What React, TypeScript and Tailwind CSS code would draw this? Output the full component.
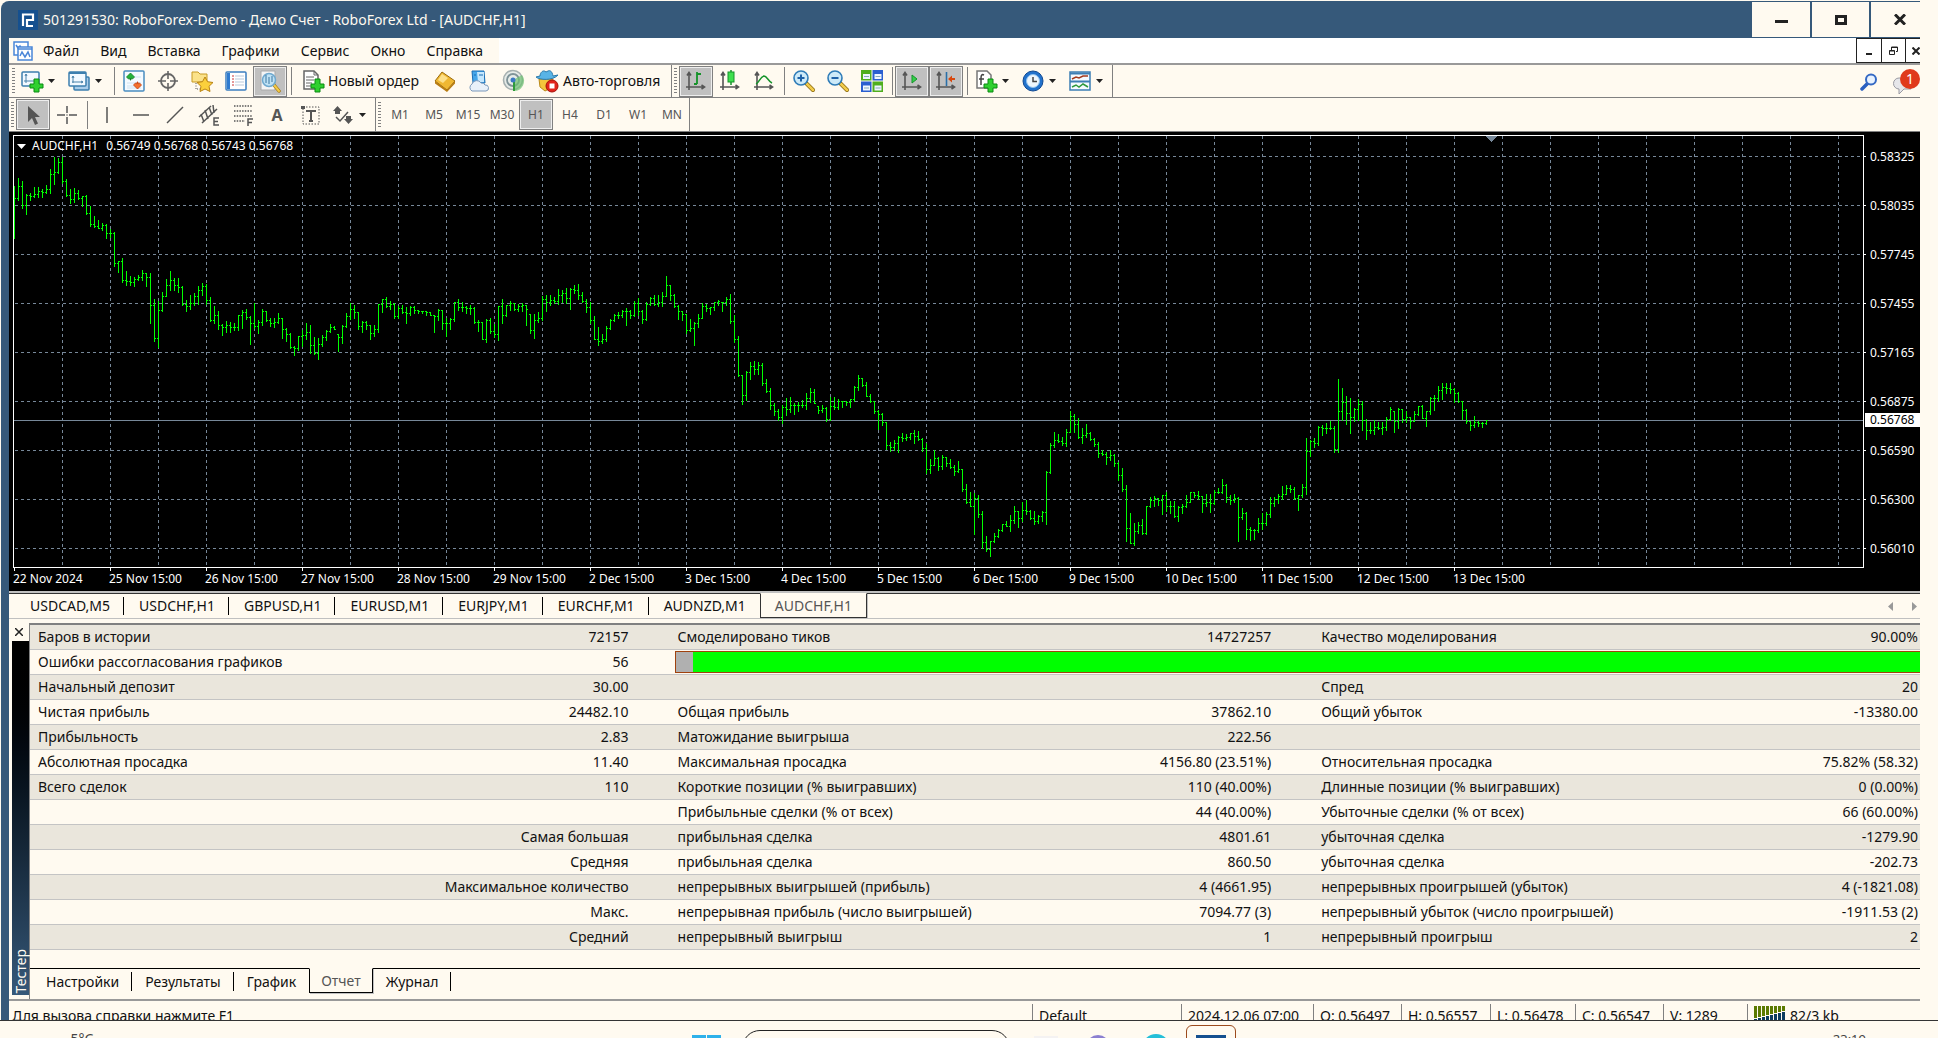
import type { ReactNode } from "react";

// [high, low, close] per bar, measured in thirds of a pixel from `base`
type Segment = { base: number; data: string };

const SEGMENTS: Segment[] = [
  {
    base: -6,
    data: `168,325,205 145,212,170 153,236,226 193,254,196 190,212,199 171,203,193 171,203,184 178,203,187 166,190,178 118,191,133
82,164,128 84,131,97 82,160,154 148,200,196 178,221,208 174,218,190 181,208,205 198,230,199 196,254,250 229,290,284
259,293,289 270,296,295 280,302,286 283,326,310 298,322,310 307,410,400 393,426,394 385,458,452 424,467,455 439,465,457
441,470,448 435,452,442 421,450,430 430,470,442 430,581,526 508,634,625 514,653,541 487,544,499 448,500,466 424,480,451
445,482,466 445,488,472 469,527,523 511,545,529 496,537,520 490,525,499 468,522,482 460,497,469 463,523,511 502,574,571
529,581,556 544,597,586 583,617,592 573,608,586 576,608,592 580,600,592 556,600,557 541,594,548 537,569,562 559,644,580
520,594,589 571,611,577 537,585,544 543,573,571 565,590,581 564,592,578 549,579,565 565,626,598 595,633,613 610,654,652
649,677,656 618,662,619 600,648,617 579,629,607 585,671,646 622,674,670 625,689,643 616,648,622 600,632,605 583,608,592
589,599,598 612,665,622 586,641,589 549,593,559 520,567,538 526,564,547 546,597,589 573,606,577 574,597,586 585,629,610
585,620,599 522,608,523 507,548,508 502,531,529 514,537,523 520,566,560 529,566,536 526,551,547 532,581,550 528,557,533
529,550,541 541,551,544 543,551,544 544,557,547 546,557,556 556,608,560 537,570,541 540,597,580 565,620,580 564,597,569
516,573,517 507,540,532 517,545,533 529,551,536 525,554,536 532,581,577 571,605,577 577,629,628 567,638,571 564,611,604
583,623,613`,
  },
  {
    base: 124,
    data: `138,242,139 118,191,166 136,170,137 124,152,130 130,150,148 134,153,139 130,153,137 137,197,149 162,221,211 162,236,181
156,188,175 109,180,118 105,153,127 105,137,121 111,130,124 87,134,106 90,126,100 84,129,116 86,147,88 75,101,90
72,119,106 96,127,124 118,158,142 126,191,181 168,239,238 202,257,244 222,251,238 198,245,205 178,209,181 162,185,166
156,176,166 150,173,154 144,197,155 150,176,166 124,168,130 114,165,155 150,191,178 127,182,133 112,136,115 105,136,133
105,140,127 96,140,109 48,110,76 76,120,106 102,143,139 136,177,154 153,180,163 162,221,211 178,215,206 187,257,190
162,203,175 130,176,139 132,155,145 142,164,143 127,151,128 121,137,124 127,155,128 111,137,118 102,191,184 166,248,238
228,350,345 346,434,406 334,420,337 306,359,319 303,344,328 306,344,316 310,377,370 358,398,394 385,449,436 429,467,455
447,480,472 436,491,442 414,465,448 411,458,436 430,464,436 427,455,436 421,441,436 400,447,415 385,426,397 388,431,430
438,461,451 436,458,445 442,483,478 411,480,439 412,447,442 418,449,425 424,441,425 424,437,427 417,443,419 379,423,382
346,392,355 355,380,376 367,410,409 403,426,425 424,461,454 450,507,463 460,497,487 487,567,556 546,573,563 541,570,550
529,578,532 519,545,535 522,540,532 519,537,520 510,551,530 514,540,538 535,573,565 549,641,628 598,641,616 571,617,595
591,632,619 586,629,592 592,620,610 598,626,622 616,647,634 604,638,628 628,695,688 673,731,727 697,740,739 700,824,715
706,773,764 754,866,847 828,873,868 844,890,845 820,848,829 808,833,810`,
  },
  {
    base: 204,
    data: `553,575,553 544,560,559 525,575,541 498,551,514 514,563,535 487,543,511 480,524,514 510,537,536 514,554,544 526,551,529
513,545,518 394,554,397 310,399,316 277,321,301 282,308,304 291,315,311 267,320,276 214,278,229 222,276,253 235,296,292
264,311,286 252,293,280 276,302,298 294,320,313 306,353,340 330,347,342 337,374,352 330,362,346 342,380,370 367,422,406
385,453,448 436,605,565 519,611,610 549,617,574 546,581,556 538,584,580 498,584,499 471,501,480 469,500,475 474,497,481
466,524,466 457,513,499 484,521,499 484,533,530 498,545,502 492,521,499 465,503,487 457,488,458 457,473,466 454,479,469
468,518,490 462,500,487 462,518,490 450,494,457 444,461,457 418,461,436 432,486,472 466,494,481 463,488,475 471,605,532
505,539,520 516,597,568 562,602,571 568,597,571 534,578,550 519,569,550 517,557,523 471,533,490 472,500,478 463,490,469
438,477,463 436,464,445 436,458,448 442,479,475 466,512,467 433,473,442 294,464,333 301,349,304 294,323,310 258,315,262
255,287,265 249,281,265 243,269,265 258,338,329 118,338,214 145,241,187 169,254,220 175,281,232 204,245,208 178,242,193
184,272,240 237,299,271 246,281,271 241,284,262 246,269,265 246,284,262 232,272,238 202,240,208 214,278,244 204,266,208
208,248,239 214,246,232 232,266,245 214,245,223 199,227,200 196,236,235 214,260,215 171,223,175 166,211,175 138,184,151
130,179,142 130,161,145 130,161,148 145,187,160 157,187,184 184,239,211 208,249,244 243,272,256 229,261,246 243,260,249
247,263,250 241,254,242`,
  },
];

const BARS = SEGMENTS.flatMap(({ base, data }) =>
  data.split(/\s+/).map((bar) => bar.split(",").map((v) => base + Math.floor(Number(v) / 3)))
);

const barPath = BARS.map(([high, low, close], i) => {
  const x = i * 4;
  const open = i > 0 ? Math.min(Math.max(BARS[i - 1][2], high), low) : close;
  return `M${x} ${high}h1V${low + 1}h-1z M${x + 1} ${close}h1v1h-1z M${x - 1} ${open}h1v1h-1z`;
}).join(" ");

const PRICES = ["0.58325", "0.58035", "0.57745", "0.57455", "0.57165", "0.56875", "0.56590", "0.56300", "0.56010"];

const DATES = [
  "22 Nov 2024", "25 Nov 15:00", "26 Nov 15:00", "27 Nov 15:00", "28 Nov 15:00", "29 Nov 15:00",
  "2 Dec 15:00", "3 Dec 15:00", "4 Dec 15:00", "5 Dec 15:00", "6 Dec 15:00", "9 Dec 15:00",
  "10 Dec 15:00", "11 Dec 15:00", "12 Dec 15:00", "13 Dec 15:00",
];

const MENU = ["Файл", "Вид", "Вставка", "Графики", "Сервис", "Окно", "Справка"];
const PERIODS = ["M1", "M5", "M15", "M30", "H1", "H4", "D1", "W1", "MN"];
const CHART_TABS = ["USDCAD,M5", "USDCHF,H1", "GBPUSD,H1", "EURUSD,M1", "EURJPY,M1", "EURCHF,M1", "AUDNZD,M1", "AUDCHF,H1"];
const TESTER_TABS = ["Настройки", "Результаты", "График", "Отчет", "Журнал"];

const REPORT = [
  ["Баров в истории", "72157", "Смоделировано тиков", "14727257", "Качество моделирования", "90.00%"],
  ["Ошибки рассогласования графиков", "56", "", "", "", ""],
  ["Начальный депозит", "30.00", "", "", "Спред", "20"],
  ["Чистая прибыль", "24482.10", "Общая прибыль", "37862.10", "Общий убыток", "-13380.00"],
  ["Прибыльность", "2.83", "Матожидание выигрыша", "222.56", "", ""],
  ["Абсолютная просадка", "11.40", "Максимальная просадка", "4156.80 (23.51%)", "Относительная просадка", "75.82% (58.32)"],
  ["Всего сделок", "110", "Короткие позиции (% выигравших)", "110 (40.00%)", "Длинные позиции (% выигравших)", "0 (0.00%)"],
  ["", "", "Прибыльные сделки (% от всех)", "44 (40.00%)", "Убыточные сделки (% от всех)", "66 (60.00%)"],
  ["", "Самая большая", "прибыльная сделка", "4801.61", "убыточная сделка", "-1279.90"],
  ["", "Средняя", "прибыльная сделка", "860.50", "убыточная сделка", "-202.73"],
  ["", "Максимальное количество", "непрерывных выигрышей (прибыль)", "4 (4661.95)", "непрерывных проигрышей (убыток)", "4 (-1821.08)"],
  ["", "Макс.", "непрерывная прибыль (число выигрышей)", "7094.77 (3)", "непрерывный убыток (число проигрышей)", "-1911.53 (2)"],
  ["", "Средний", "непрерывный выигрыш", "1", "непрерывный проигрыш", "2"],
];

/* ---------- toolbar parts ---------- */

function Icon({ children }: { children: ReactNode }) {
  return (
    <svg viewBox="0 0 24 24" className="h-6 w-6 shrink-0" fill="none">
      {children}
    </svg>
  );
}

function Grip({ wide }: { wide?: boolean }) {
  return (
    <div className={wide ? "flex w-2 shrink-0 items-center justify-center" : "flex w-[7px] shrink-0 items-center justify-center"}>
      <div className="h-[26px] w-[3px] bg-[repeating-linear-gradient(to_bottom,#808080_0_1px,transparent_1px_3px)]" />
    </div>
  );
}

function Sep({ wide }: { wide?: boolean }) {
  return (
    <div className={wide ? "flex w-2 shrink-0 items-center justify-center" : "flex w-[6px] shrink-0 items-center justify-center"}>
      <div className="h-7 w-px bg-[#808080]" />
    </div>
  );
}

function Caret() {
  return (
    <svg viewBox="0 0 7 4" className="h-1 w-[7px]">
      <path d="M0 0h7L3.500 4z" fill="#222" />
    </svg>
  );
}

function Tool({ label, active, children }: { label: string; active?: boolean; children: ReactNode }) {
  return (
    <button
      aria-label={label}
      className={
        active
          ? "flex h-[31px] w-[34px] shrink-0 items-center justify-center border border-[#808080] bg-[#c0c0c0] shadow-[inset_0_0_0_1px_#eee]"
          : "flex h-[31px] w-[34px] shrink-0 items-center justify-center"
      }
    >
      {children}
    </button>
  );
}

function DropTool({ label, children }: { label: string; children: ReactNode }) {
  return (
    <button aria-label={label} className="flex h-[31px] w-[47px] shrink-0 items-center gap-1 pl-[3px]">
      {children}
      <Caret />
    </button>
  );
}

const Plus = () => (
  <path d="M14 10h5v5h4v4h-4v4h-5v-4h-4v-4h4z" fill="#2fd02f" stroke="#0a8a12" strokeWidth="1" />
);

const Axes = () => (
  <path d="M5 4v17M2 18h18M3 6.500L5 3.500l2 3M17.500 16l3 2-3 2" stroke="#555" strokeWidth="1.600" />
);

const Glass = ({ minus }: { minus?: boolean }) => (
  <Icon>
    <path d="M14 14l7 7" stroke="#8a6a10" strokeWidth="4" strokeLinecap="round" />
    <path d="M15 15l6 6" stroke="#f2cb4a" strokeWidth="2.500" strokeLinecap="round" />
    <circle cx="9" cy="9" r="7" fill="#cdeaf8" stroke="#2f7cb8" strokeWidth="1.600" />
    <path d={minus ? "M5.500 9h7" : "M5.500 9h7M9 5.500v7"} stroke="#1f62a8" strokeWidth="2" />
  </Icon>
);

function MainToolbar() {
  return (
    <div className="flex h-[33px] items-center border-b border-[#808080]">
      <div className="flex h-full items-center border-r border-[#808080]">
        <Grip wide />
        <DropTool label="Новый график">
          <Icon>
            <rect x="2" y="3" width="17" height="14" rx="1" fill="#f2f9ff" stroke="#3d7fae" strokeWidth="1.500" />
            <path d="M6 5v9M4 12h12M5 7l1-2 1 2" stroke="#4a83aa" />
            <Plus />
          </Icon>
        </DropTool>
        <DropTool label="Профили">
          <Icon>
            <rect x="7" y="8" width="15" height="13" rx="1" fill="#a9cdea" stroke="#3d7fae" strokeWidth="1.500" />
            <rect x="2" y="3" width="17" height="14" rx="1" fill="#f2f9ff" stroke="#3d7fae" strokeWidth="1.500" />
            <path d="M2 4h17" stroke="#3d7fae" strokeWidth="2" />
            <path d="M6 7v7M5 9l1-2 1 2M5 13h11M14 12l2 1-2 1" stroke="#4a83aa" />
          </Icon>
        </DropTool>
        <Sep />
        <Tool label="Обзор рынка">
          <Icon>
            <rect x="2" y="2" width="20" height="20" rx="1" fill="#f4faff" stroke="#4a8dc0" strokeWidth="1.500" />
            <path d="M5 17h14M5 14h14M5 8h14M5 19h14" stroke="#cfe2f0" />
            <path d="M8.500 4l4 4-2 2-1.500-1v2H8V9L6.500 10l-2-2z" fill="#24b33a" stroke="#127a22" strokeWidth=".8" />
            <path d="M15.500 20l-4-4 2-2 1.500 1v-2h1v2l1.500-1 2 2z" fill="#f4702c" stroke="#c8400c" strokeWidth=".8" />
          </Icon>
        </Tool>
        <Tool label="Окно данных">
          <Icon>
            <circle cx="12" cy="12" r="7" stroke="#666" strokeWidth="1.800" />
            <path d="M12 2v8M12 14v8M2 12h8M14 12h8" stroke="#666" strokeWidth="1.600" />
          </Icon>
        </Tool>
        <Tool label="Навигатор">
          <Icon>
            <path d="M2 3h6l2 2h7v8H2z" fill="#fbe28a" stroke="#c79a24" />
            <path d="M6 14v7M7 20h4" stroke="#555" strokeDasharray="1 1.500" />
            <path d="M15 8l2.500 4.700 5.500.8-4 3.800 1 5.200-5-2.500-5 2.500 1-5.200-4-3.800 5.500-.8z" fill="#fbd03c" stroke="#b98212" />
          </Icon>
        </Tool>
        <Tool label="Терминал">
          <Icon>
            <rect x="2" y="3" width="20" height="18" rx="1" fill="#fff" stroke="#3d7fc0" strokeWidth="1.500" />
            <rect x="3" y="4" width="3" height="16" fill="#2f7bd0" />
            <path d="M8 7h2M8 10h2M8 13h2M8 16h2" stroke="#c33" />
            <path d="M11 7h9M11 10h9M11 13h9M11 16h9" stroke="#b9c9da" />
          </Icon>
        </Tool>
        <Tool label="Тестер стратегий" active>
          <Icon>
            <path d="M3 2h14v19H3z" fill="#f5f5f5" stroke="#aaa" />
            <path d="M16 16l5 6" stroke="#a87a10" strokeWidth="3.500" strokeLinecap="round" />
            <path d="M16 16l5 6" stroke="#f2cb4a" strokeWidth="2" strokeLinecap="round" />
            <circle cx="11" cy="11" r="6.500" fill="#bfe2f5" stroke="#6fa9cf" strokeWidth="1.500" />
            <path d="M8 6v8M11 8v7M14 7v6" stroke="#3b77a0" />
          </Icon>
        </Tool>
        <Sep wide />
        <button className="flex h-[31px] w-[133px] shrink-0 items-center gap-[3px] whitespace-nowrap pl-1.5">
          <Icon>
            <path d="M3 2h10l4 4v14H3z" fill="#fff" stroke="#666" strokeWidth="1.500" />
            <path d="M13 2v4h4" stroke="#666" />
            <path d="M5 8h8M5 11h8M5 14h6M5 17h5" stroke="#666" />
            <Plus />
          </Icon>
          Новый ордер
        </button>
        <Tool label="Редактор MetaEditor">
          <Icon>
            <path d="M2 12L9 3l13 9-8 9z" fill="#f0b832" stroke="#9a6a0c" />
            <path d="M2 12l12 9 8-9v2.500L14 23 2 14.500z" fill="#b97d12" />
            <path d="M5 11l4-6 6 4-5 5z" fill="#fde08a" />
          </Icon>
        </Tool>
        <Tool label="Хостинг">
          <Icon>
            <path d="M5 2h12l1 12H6z" fill="#45a6ea" stroke="#1a6db4" />
            <path d="M10 3h7v10h-6z" fill="#c5e7fd" />
            <path d="M7 6h2M12 6h4" stroke="#1a6db4" />
            <path d="M5 22a4 4 0 010-7 5 5 0 019-1 4 4 0 014 2 3 3 0 011 6z" fill="#e9f1fa" stroke="#7b98bb" />
          </Icon>
        </Tool>
        <Tool label="Сигналы">
          <Icon>
            <circle cx="12" cy="11" r="9.500" fill="#e6ebe8" stroke="#a6b0b0" strokeWidth="1.600" />
            <circle cx="12" cy="11" r="6" stroke="#7f9398" strokeWidth="1.800" />
            <path d="M12 11l9-5a10 10 0 01-8 16z" fill="#6cc070" opacity=".7" />
            <path d="M13 11v11" stroke="#2f9c3a" strokeWidth="2" />
            <circle cx="12" cy="11" r="2.500" fill="#3c78c4" />
          </Icon>
        </Tool>
        <button className="flex h-[31px] w-[141px] shrink-0 items-center gap-1 whitespace-nowrap pl-[5px]">
          <Icon>
            <path d="M4 10h14l-2 9-6 3-5-4z" fill="#f4c53b" stroke="#b98a1a" />
            <path d="M1 8c3 3 17 4 22-2l-5 1C17 2 15 1 13 2l-2 1C8 0 5 4 5 7z" fill="#58b4e6" stroke="#2a7aac" />
            <circle cx="17" cy="17" r="6" fill="#e2231a" stroke="#a61009" />
            <rect x="14.500" y="14.500" width="5" height="5" fill="#fff" />
          </Icon>
          Авто-торговля
        </button>
      </div>
      <div className="flex h-full items-center border-r border-[#808080]">
        <Grip />
        <Tool label="Бары" active>
          <Icon>
            <Axes />
            <path d="M13 3v12M13 5h4M10 15h3" stroke="#15932a" strokeWidth="1.800" />
          </Icon>
        </Tool>
        <Tool label="Японские свечи">
          <Icon>
            <Axes />
            <path d="M13 1v15" stroke="#15932a" strokeWidth="1.500" />
            <rect x="10" y="3" width="6" height="10" fill="#3ee04e" stroke="#15932a" />
          </Icon>
        </Tool>
        <Tool label="Линия">
          <Icon>
            <Axes />
            <path d="M4 15c3-1 4-7 8-8 3 0 4 5 8 7" stroke="#15932a" strokeWidth="1.500" />
          </Icon>
        </Tool>
        <Sep />
        <Tool label="Увеличить"><Glass /></Tool>
        <Tool label="Уменьшить"><Glass minus /></Tool>
        <Tool label="Окна мозаикой">
          <Icon>
            <path d="M1 1h10.500v10.500H1zM12.500 12.500H23V23H12.500z" fill="#4fae1e" />
            <path d="M12.500 1H23v10.500H12.500zM1 12.500h10.500V23H1z" fill="#2a5fd0" />
            <path d="M3 5h7v5H3zM14.500 5h7v5h-7zM3 16.500h7v5H3zM14.500 16.500h7v5h-7z" fill="#eef6ff" />
            <path d="M4 7.500h5M15.500 7.500h5M4 19h5M15.500 19h5" stroke="#8ab" />
          </Icon>
        </Tool>
        <Sep />
        <Tool label="Автопрокрутка" active>
          <Icon>
            <Axes />
            <path d="M12 6l5 4-5 4z" fill="#35d04a" stroke="#15932a" />
          </Icon>
        </Tool>
        <Tool label="Сдвиг графика" active>
          <Icon>
            <Axes />
            <path d="M12.500 3v14" stroke="#2a6fa8" strokeWidth="1.600" />
            <path d="M14 10l4-3.500v2.500h3v2h-3v2.500z" fill="#d8480e" />
          </Icon>
        </Tool>
        <Sep wide />
        <DropTool label="Индикаторы">
          <Icon>
            <path d="M3 2h10l4 4v13H3z" fill="#fff" stroke="#777" strokeWidth="1.500" />
            <path d="M10 6c-2-1-3 0-3 3v7M5 10h5" stroke="#444" strokeWidth="1.500" />
            <Plus />
          </Icon>
        </DropTool>
        <DropTool label="Периоды">
          <Icon>
            <circle cx="12" cy="12" r="10" fill="#2272cc" stroke="#124a92" />
            <circle cx="12" cy="12" r="6.500" fill="#eef6fd" stroke="#8ec2f0" />
            <path d="M12 8v4.500h4" stroke="#444" strokeWidth="1.500" />
          </Icon>
        </DropTool>
        <DropTool label="Шаблоны">
          <Icon>
            <rect x="2" y="3" width="20" height="18" fill="#f6fbff" stroke="#3d7fb4" strokeWidth="1.500" />
            <path d="M2 4.500h20M2 12.500h20" stroke="#3d7fb4" strokeWidth="2" />
            <path d="M4 10l4-2 3 1 4-2 5 0" stroke="#a33b1e" strokeWidth="1.500" />
            <path d="M4 18l4-2 3 2 4-3 5 3" stroke="#2f9a3c" strokeWidth="1.500" />
          </Icon>
        </DropTool>
      </div>
    </div>
  );
}

function LineToolbar() {
  return (
    <div className="flex h-[34px] items-center border-b border-[#808080] text-xs text-[#555]">
      <div className="flex h-full items-center border-r border-[#808080]">
        <Grip />
        <Tool label="Курсор" active>
          <Icon><path d="M7 3v16l4-4 3 7 3-1.500-3-6.500h5z" fill="#555" /></Icon>
        </Tool>
        <Tool label="Перекрестие">
          <Icon><path d="M12 3v7M12 14v7M2 12h8M14 12h8M12 11.500v1" stroke="#555" strokeWidth="1.500" /></Icon>
        </Tool>
        <Sep />
        <Tool label="Вертикальная линия">
          <Icon><path d="M12 4v16" stroke="#555" strokeWidth="1.500" /></Icon>
        </Tool>
        <Tool label="Горизонтальная линия">
          <Icon><path d="M4 12h16" stroke="#555" strokeWidth="1.500" /></Icon>
        </Tool>
        <Tool label="Трендовая линия">
          <Icon><path d="M4 20L20 4" stroke="#555" strokeWidth="1.500" /></Icon>
        </Tool>
        <Tool label="Равноудаленный канал">
          <Icon>
            <path d="M2 14L14 3M5 20L20 6M4 11l3 8M8 7l3 9M12 4l3 8M16 2l1 8" stroke="#555" strokeWidth="1.500" />
            <path d="M22 15h-5v7h5M17 18.500h4" stroke="#555" strokeWidth="1.500" />
          </Icon>
        </Tool>
        <Tool label="Линии Фибоначчи">
          <Icon>
            <path d="M3 3h18M3 8h18M3 13h18M3 18h11" stroke="#555" strokeWidth="1.500" strokeDasharray="1.500 1.200" />
            <path d="M22 16h-5v7M17 19.500h4" stroke="#555" strokeWidth="1.500" />
          </Icon>
        </Tool>
        <button className="h-[31px] w-[34px] text-base font-bold">A</button>
        <Tool label="Текстовая метка">
          <Icon>
            <rect x="4" y="4" width="16" height="17" stroke="#555" strokeDasharray="1.500 1.500" />
            <path d="M7 8h10M12 8v10M10 18h4" stroke="#555" strokeWidth="2" />
            <path d="M2 3h4v3H2z" fill="#555" />
          </Icon>
        </Tool>
        <DropTool label="Стрелки">
          <Icon>
            <path d="M6.500 3l4.500 5H9v3H4V8H2z" fill="#555" />
            <path d="M17.500 21L13 16h2v-3h5v3h2z" fill="#555" />
            <path d="M5 14l4 4 8-9" stroke="#555" strokeWidth="1.500" />
          </Icon>
        </DropTool>
      </div>
      <div className="flex h-full items-center border-r border-[#808080]">
        <Grip />
        {PERIODS.map((p) => (
          <Tool key={p} label={p} active={p === "H1"}>{p}</Tool>
        ))}
      </div>
    </div>
  );
}

/* ---------- window ---------- */

function TitleBar() {
  return (
    <header className="flex h-[37px] items-stretch rounded-tl-lg bg-[#36597a] text-[#fffaf0]">
      <div className="flex flex-1 items-center gap-[5px] pl-[17px]">
        <svg viewBox="0 0 20 20" className="h-5 w-5" fill="none">
          <rect width="20" height="20" fill="#15508f" />
          <path d="M5 16V4.500h10V10H9v6h6" stroke="#fff" strokeWidth="2.200" />
        </svg>
        <h1 className="whitespace-nowrap">501291530: RoboForex-Demo - Демо Счет - RoboForex Ltd - [AUDCHF,H1]</h1>
      </div>
      <div className="flex gap-0.5 py-px text-[#222]">
        <button aria-label="Свернуть" className="flex w-[58px] items-center justify-center bg-[#fffaf0]">
          <span className="mt-1 h-[3px] w-[13px] bg-[#222]" />
        </button>
        <button aria-label="Развернуть" className="flex w-[57px] items-center justify-center bg-[#fffaf0]">
          <span className="h-[10px] w-3 border-[3px] border-[#222]" />
        </button>
        <button aria-label="Закрыть" className="flex w-[49px] items-center bg-[#fffaf0] pl-[23px]">
          <svg viewBox="0 0 12 11" className="h-[11px] w-3"><path d="M1 .5l10 10M11 .5l-10 10" stroke="#222" strokeWidth="3" /></svg>
        </button>
      </div>
    </header>
  );
}

function MenuBar() {
  return (
    <nav className="flex h-[25px] bg-white">
      <div className="flex w-[490px] items-center bg-[#fffaf0] pl-1">
        <svg viewBox="0 0 20 20" className="h-5 w-5" fill="none" stroke="#4a86d8" strokeWidth="1.500">
          <path d="M1 1h14v13H1z" fill="#fff" />
          <path d="M3 4l2 3 2-2 2 4" />
          <path d="M5 6h14v13H5z" fill="#fff" />
          <path d="M5 8h14M7 15l2-4 3 5 3-5 2 5" />
        </svg>
        {MENU.map((m) => (
          <button key={m} className="pr-[11px] pl-[10px]">{m}</button>
        ))}
      </div>
      <div className="flex-1" />
      <div className="flex">
        <button aria-label="Свернуть окно" className="flex w-[25px] items-end justify-center border border-r-0 border-[#222] pb-[7px]">
          <span className="h-0.5 w-1.5 bg-[#222]" />
        </button>
        <button aria-label="Восстановить окно" className="flex w-6 items-center justify-center border border-r-0 border-[#222]">
          <svg viewBox="0 0 9 9" className="h-[9px] w-[9px]" fill="none" stroke="#222">
            <path d="M2.500 4V1h6v4.500H7M.500 4.500h5v4h-5zM.500 5h5M2.500 1.500h6" />
          </svg>
        </button>
        <button aria-label="Закрыть окно" className="flex w-[15px] items-center justify-end border border-r-0 border-[#222]">
          <svg viewBox="0 0 8 8" className="h-2 w-2"><path d="M.500.500l7 7M7.500.500l-7 7" stroke="#222" strokeWidth="2" /></svg>
        </button>
      </div>
    </nav>
  );
}

function Chart() {
  return (
    <section className="bg-black pt-[3px] pl-1 text-xs text-white">
      <div className="flex">
        <div className="relative h-[433px] min-w-0 flex-1 overflow-hidden border border-white">
          <svg className="block h-full w-full" shapeRendering="crispEdges">
            <defs>
              <pattern id="cols" x="48" width="48" height="6" patternUnits="userSpaceOnUse">
                <rect width="1" height="3" fill="#778899" />
              </pattern>
              <pattern id="rows" y="20" width="6" height="49" patternUnits="userSpaceOnUse">
                <rect x="1" width="3" height="1" fill="#778899" />
              </pattern>
            </defs>
            <rect x="1" width="100%" height="431" fill="url(#cols)" />
            <rect y="1" width="100%" height="430" fill="url(#rows)" />
            <rect y="284" width="100%" height="1" fill="#778899" />
            <path d={barPath} fill="#00ff00" />
            <path d="M1472 0h11l-5.500 6z" fill="#778899" />
          </svg>
          <div className="absolute top-0 left-[3px] flex items-center whitespace-nowrap leading-5">
            <svg viewBox="0 0 9 5" className="h-[5px] w-[9px]"><path d="M0 0h9L4.500 5z" fill="#fff" /></svg>
            <span className="ml-1.5">AUDCHF,H1</span>
            <span className="ml-2">0.56749 0.56768 0.56743 0.56768</span>
          </div>
        </div>
        <div className="relative -mt-[3px] -mb-2 w-14 shrink-0">
          {PRICES.map((p) => (
            <div key={p} className="flex h-[49px] items-center gap-1">
              <span className="h-px w-0.5 bg-white" />
              {p}
            </div>
          ))}
          <div className="absolute top-[281px] right-0 left-px h-[14px] bg-white pl-[5px] leading-[14px] text-black">0.56768</div>
        </div>
      </div>
      <div className="flex h-[23px] overflow-hidden">
        {DATES.map((d) => (
          <div key={d} className="w-24 shrink-0 whitespace-nowrap leading-4">
            <div className="ml-px h-[3px] w-px bg-white" />
            {d}
          </div>
        ))}
      </div>
    </section>
  );
}

function ChartTabs() {
  return (
    <div className="flex h-[28px] border-t-2 border-b border-[#c0c0c0]">
      <div role="tablist" className="flex flex-1 items-start border-t border-[#333] pl-[6px]">
        {CHART_TABS.map((t, i) =>
          i === CHART_TABS.length - 1 ? (
            <button key={t} role="tab" aria-selected className="-mt-px h-[25px] border border-[#333] border-t-[#fffaf0] bg-[#fffaf0] px-[14px] text-[#555] shadow-[1px_1px_0_#c0c0c0]">{t}</button>
          ) : (
            <button
              key={t}
              role="tab"
              aria-selected={false}
              className={
                i === CHART_TABS.length - 2
                  ? "h-[23px] pr-[14px] pl-[15px]"
                  : "relative h-[23px] pr-[14px] pl-[15px] after:absolute after:top-[3px] after:right-0 after:h-[18px] after:w-px after:bg-black"
              }
            >
              {t}
            </button>
          )
        )}
      </div>
      <div className="flex items-center gap-[19px] border-t border-[#333] pr-[3px]">
        <button aria-label="Назад"><svg viewBox="0 0 5 9" className="h-[9px] w-[5px]"><path d="M5 0v9L0 4.500z" fill="#999" /></svg></button>
        <button aria-label="Вперед"><svg viewBox="0 0 5 9" className="h-[9px] w-[5px]"><path d="M0 0v9l5-4.500z" fill="#999" /></svg></button>
      </div>
    </div>
  );
}

function Report() {
  return (
    <table className="w-full table-fixed border-separate border-spacing-0">
      <colgroup>
        <col className="w-[15%]" />
        <col className="w-[19%]" />
        <col className="w-[18%]" />
        <col className="w-[16%]" />
        <col className="w-[17%]" />
        <col className="w-[15%]" />
      </colgroup>
      <tbody>
        {REPORT.map((row, i) => (
          <tr key={i} className="h-[25px] leading-6 whitespace-nowrap odd:bg-[#eae6dc] [&>td]:border-b [&>td]:border-[#c4c4c4]">
            <td className="py-0 pl-2">{row[0]}</td>
            <td className="py-0 pr-11 text-right">{row[1]}</td>
            {i === 1 ? (
              <td colSpan={4} className="py-0 pl-0.5">
                <div role="progressbar" aria-label="Качество моделирования" className="flex h-[22px] border border-r-0 border-[#a0410d] bg-[#00ff00]">
                  <span className="w-[17px] bg-[#b0b0b0]" />
                </div>
              </td>
            ) : (
              <>
                <td className="py-0 pl-[5px]">{row[2]}</td>
                <td className="py-0 pr-11 text-right">{row[3]}</td>
                <td className="py-0 pl-[6px]">{row[4]}</td>
                <td className="py-0 pr-0.5 text-right">{row[5]}</td>
              </>
            )}
          </tr>
        ))}
      </tbody>
    </table>
  );
}

function Tester() {
  return (
    <section className="mt-1 flex pl-[3px]">
      <aside className="flex w-[17px] shrink-0 flex-col pb-1">
        <button aria-label="Закрыть панель" className="flex h-[18px] items-center pl-[3px]">
          <svg viewBox="0 0 8 8" className="h-2 w-2"><path d="M0 0l8 8M8 0L0 8" stroke="#222" strokeWidth="1.500" /></svg>
        </button>
        <div className="flex flex-1 items-end justify-center bg-linear-to-b from-black to-[#36597a] pb-0.5">
          <span className="rotate-180 leading-4 text-[#fffaf0] [writing-mode:vertical-rl]">Тестер</span>
        </div>
      </aside>
      <div className="min-w-0 flex-1 border-t-2 border-l border-[#808080]">
        <Report />
        <div role="tablist" className="mt-[18px] flex h-[31px] items-start border-t border-black pl-[3px]">
          {TESTER_TABS.map((t) =>
            t === "Отчет" ? (
              <button key={t} role="tab" aria-selected className="-mt-px h-[25px] border border-black border-t-[#fffaf0] bg-[#fffaf0] px-[11px] text-[#555] shadow-[1px_1px_0_#c0c0c0]">{t}</button>
            ) : (
              <button
                key={t}
                role="tab"
                aria-selected={false}
                className={
                  t === "График"
                    ? "h-[25px] px-[13px]"
                    : "relative h-[25px] px-[13px] after:absolute after:top-[3px] after:right-0 after:h-[19px] after:w-px after:bg-black"
                }
              >
                {t}
              </button>
            )
          )}
        </div>
      </div>
    </section>
  );
}

function StatusCell({ className, children }: { className: string; children: ReactNode }) {
  return (
    <div className={`relative pt-[5px] pl-[7px] before:absolute before:top-[3px] before:left-0 before:h-5 before:w-px before:bg-[#808080] ${className}`}>
      {children}
    </div>
  );
}

function StatusBar() {
  return (
    <footer className="flex h-[21px] shrink-0 overflow-hidden border-t-2 border-[#999] leading-5 whitespace-nowrap">
      <div className="flex-1 pt-[5px] pl-[3px]">Для вызова справки нажмите F1</div>
      <StatusCell className="w-[149px]">Default</StatusCell>
      <StatusCell className="w-[132px]">2024.12.06 07:00</StatusCell>
      <StatusCell className="w-[88px]">O: 0.56497</StatusCell>
      <StatusCell className="w-[89px]">H: 0.56557</StatusCell>
      <StatusCell className="w-[85px]">L: 0.56478</StatusCell>
      <StatusCell className="w-[88px]">C: 0.56547</StatusCell>
      <StatusCell className="w-[84px]">V: 1289</StatusCell>
      <StatusCell className="flex w-[173px] gap-1">
        <svg viewBox="0 0 32 14" className="h-[14px] w-8">
          {[0, 1, 2, 3, 4, 5, 6, 7].map((n) => (
            <g key={n}>
              <rect x={n * 4} width="3" height={12 - n} fill="#5b7a00" />
              <rect x={n * 4} y={13 - n} width="3" height={n + 1} fill="#0c3c60" />
            </g>
          ))}
        </svg>
        82/3 kb
      </StatusCell>
    </footer>
  );
}

function Taskbar() {
  return (
    <div className="flex min-h-0 flex-1 items-start overflow-hidden border-t border-[#333] leading-5 text-[#444]">
      <div className="mt-2 flex-1 pl-[66px]">-5°C</div>
      <svg viewBox="0 0 29 29" className="mt-[14px] h-[29px] w-[29px]">
        <path d="M0 0h14v14H0zM15 0h14v14H15z" fill="#2fb1ea" />
      </svg>
      <input aria-label="Поиск" className="mt-[9px] ml-[21px] h-9 w-[268px] rounded-full border border-[#222]" />
      <span className="mt-[15px] ml-6 h-6 w-6 bg-[#f4f2f2]" />
      <span className="mt-[14px] ml-7 h-6 w-6 rounded-full bg-[#8b7fd0]" />
      <span className="mt-[13px] ml-8 h-7 w-7 rounded-full bg-[#25bfd8]" />
      <span className="mt-[4px] ml-4 flex h-12 w-[50px] justify-center rounded-md border border-[#9c4a1c] pt-[9px]">
        <span className="h-8 w-[30px] bg-[#15508f]" />
      </span>
      <time className="mt-2 mr-[72px] ml-[597px] text-[13px]">23:19</time>
    </div>
  );
}

export default function App() {
  return (
    <div className="flex h-screen flex-col overflow-hidden bg-[#fffaf0] pt-px font-['Noto_Sans','Open_Sans',sans-serif] text-sm text-[#111]">
      <div className="mr-[18px] ml-px shrink-0">
        <TitleBar />
        <div className="border-l-8 border-[#36597a]">
          <MenuBar />
          <div className="relative border-t-2 border-[#999]">
            <MainToolbar />
            <LineToolbar />
            <div className="absolute top-1 right-0 flex items-start gap-[13px]">
              <button aria-label="Поиск" className="pt-1">
                <svg viewBox="0 0 18 18" className="h-[18px] w-[18px]" fill="none">
                  <path d="M8 10l-6 6" stroke="#2a5fc0" strokeWidth="3.500" strokeLinecap="round" />
                  <circle cx="11" cy="6.500" r="5" fill="#e8f2ff" stroke="#3569c4" strokeWidth="2" />
                </svg>
              </button>
              <button aria-label="Сообщения" className="relative h-[30px] w-[29px]">
                <svg viewBox="0 0 29 30" className="h-[30px] w-[29px]">
                  <path d="M8 9h12v11h-7l-5 5v-5a5.500 5.500 0 010-11z" fill="#e6e6ea" stroke="#9a9aa2" />
                </svg>
                <span className="absolute top-0 right-0 h-5 w-5 rounded-full bg-[#e03a1c] leading-5 text-white">1</span>
              </button>
            </div>
          </div>
          <Chart />
          <ChartTabs />
          <Tester />
          <StatusBar />
        </div>
      </div>
      <Taskbar />
    </div>
  );
}
